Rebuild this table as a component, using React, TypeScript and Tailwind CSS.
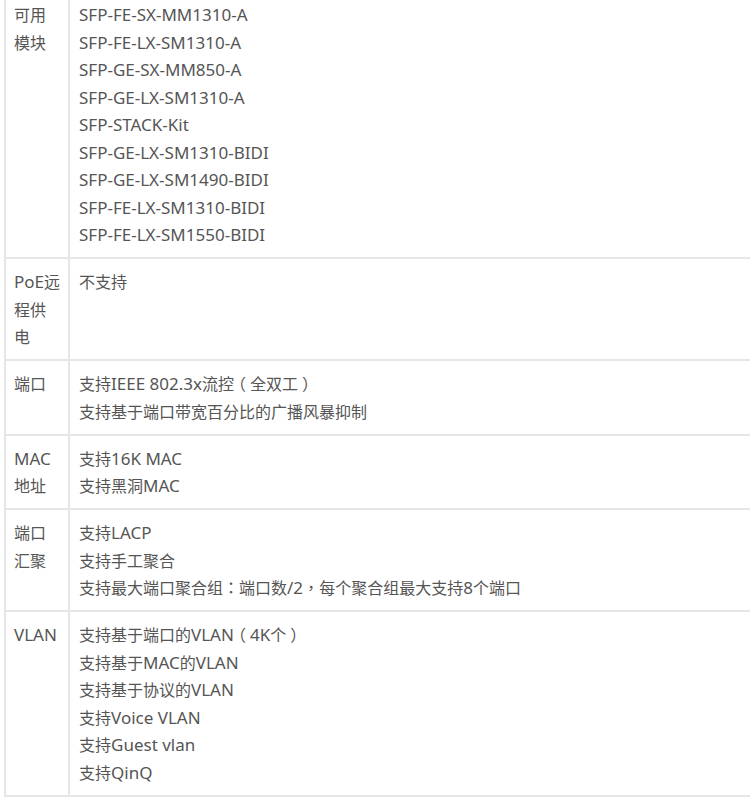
import React from "react";

const rows: { label: string[]; items: string[] }[] = [
  {
    label: ["可用", "模块"],
    items: [
      "SFP-FE-SX-MM1310-A",
      "SFP-FE-LX-SM1310-A",
      "SFP-GE-SX-MM850-A",
      "SFP-GE-LX-SM1310-A",
      "SFP-STACK-Kit",
      "SFP-GE-LX-SM1310-BIDI",
      "SFP-GE-LX-SM1490-BIDI",
      "SFP-FE-LX-SM1310-BIDI",
      "SFP-FE-LX-SM1550-BIDI",
    ],
  },
  { label: ["PoE远", "程供", "电"], items: ["不支持"] },
  {
    label: ["端口"],
    items: ["支持IEEE 802.3x流控（全双工）", "支持基于端口带宽百分比的广播风暴抑制"],
  },
  { label: ["MAC", "地址"], items: ["支持16K MAC", "支持黑洞MAC"] },
  {
    label: ["端口", "汇聚"],
    items: ["支持LACP", "支持手工聚合", "支持最大端口聚合组：端口数/2，每个聚合组最大支持8个端口"],
  },
  {
    label: ["VLAN"],
    items: [
      "支持基于端口的VLAN（4K个）",
      "支持基于MAC的VLAN",
      "支持基于协议的VLAN",
      "支持Voice VLAN",
      "支持Guest vlan",
      "支持QinQ",
    ],
  },
];

function Line({ text }: { text: string }) {
  const parts = text.split(/([\u4e00-\u9fff]+|[\u3000-\u303f\uff00-\uffef])/).filter((p) => p.length > 0);
  return (
    <div className="h-[27.5px] leading-[27.5px] whitespace-nowrap">
      {parts.map((p, i) => {
        if (/[\u4e00-\u9fff]/.test(p)) {
          return (
            <span key={i} className="text-[16px] font-['Noto_Sans_CJK_SC',sans-serif]">
              {p}
            </span>
          );
        }
        if (p === "（" || p === "）") {
          return (
            <span
              key={i}
              className="inline-block text-[16px] px-[4px] font-['Noto_Sans_CJK_SC',sans-serif] [font-feature-settings:'halt']"
            >
              {p}
            </span>
          );
        }
        if (/[\u3000-\u303f\uff00-\uffef]/.test(p)) {
          return (
            <span key={i} className="text-[16px] font-['Noto_Sans_CJK_TC',sans-serif]">
              {p}
            </span>
          );
        }
        return (
          <span key={i} className="text-[17px]">
            {p}
          </span>
        );
      })}
    </div>
  );
}

export default function App() {
  return (
    <div className="w-[750px] h-[798px] overflow-hidden bg-white text-[#555] text-[16px] leading-[27.5px] font-['Noto_Sans','Noto_Sans_CJK_SC',sans-serif]">
      <div className="-mt-[8px] ml-[4px] border-l-2 border-[#e6e6e6]">
        {rows.map((r, i) => (
          <div key={i} className="grid grid-cols-[64px_1fr] border-b-2 border-[#e6e6e6]">
            <div className="border-r-2 border-[#e6e6e6] pl-[8px] pt-[9px] pb-[8.5px]">
              {r.label.map((l, j) => (
                <Line key={j} text={l} />
              ))}
            </div>
            <div className="pl-[9px] pt-[9px] pb-[8.5px]">
              {r.items.map((t, j) => (
                <Line key={j} text={t} />
              ))}
            </div>
          </div>
        ))}
      </div>
    </div>
  );
}
